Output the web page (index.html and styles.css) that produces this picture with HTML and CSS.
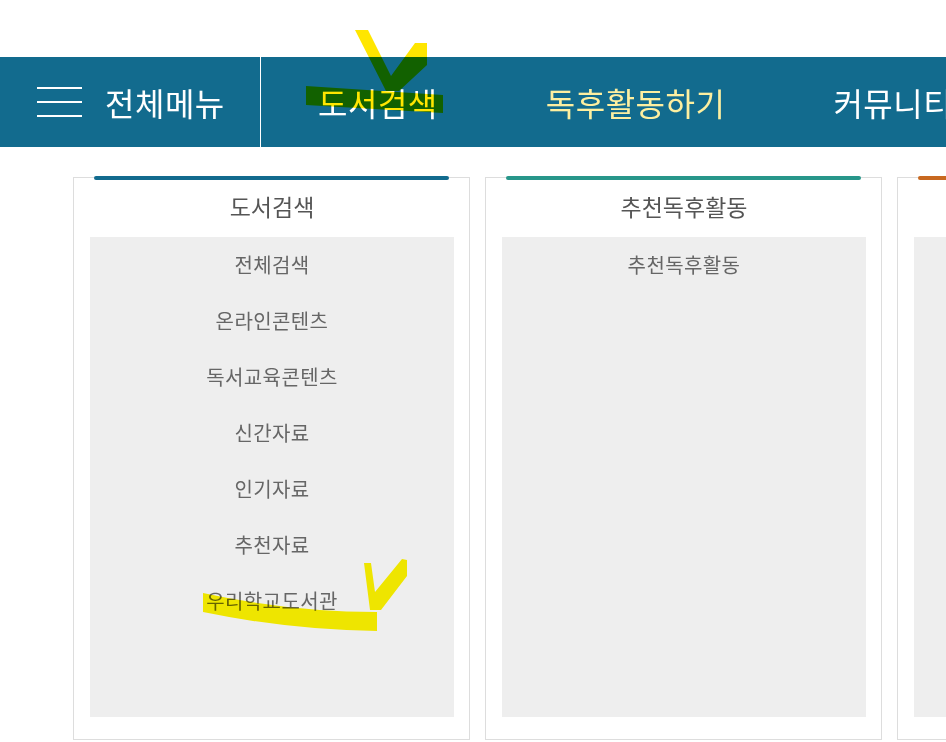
FILE: index.html
```html
<!DOCTYPE html>
<html lang="ko">
<head>
    <meta charset="UTF-8">
    <meta name="viewport" content="width=device-width, initial-scale=1.0">
    <title>도서검색 - 전체메뉴</title>
    <link rel="stylesheet" href="styles.css">
</head>
<body>

    <div class="page">
        <div class="top-space"></div>

        <!-- 상단 메뉴 -->
        <nav class="gnb">
            <div class="all-menu">
                <span class="hamburger"><i></i><i></i><i></i></span>
                <span class="all-menu-label">전체메뉴</span>
            </div>
            <ul class="gnb-list">
                <li>도서검색</li>
                <li class="on">독후활동하기</li>
                <li>커뮤니티</li>
            </ul>
        </nav>

        <!-- 서브메뉴 -->
        <div class="submenu">
            <section class="sub-card blue">
                <span class="sub-bar"></span>
                <h2 class="sub-title">도서검색</h2>
                <ul class="sub-list">
                    <li>전체검색</li>
                    <li>온라인콘텐츠</li>
                    <li>독서교육콘텐츠</li>
                    <li>신간자료</li>
                    <li>인기자료</li>
                    <li>추천자료</li>
                    <li>우리학교도서관</li>
                </ul>
            </section>
            <section class="sub-card teal">
                <span class="sub-bar"></span>
                <h2 class="sub-title">추천독후활동</h2>
                <ul class="sub-list">
                    <li>추천독후활동</li>
                </ul>
            </section>
            <section class="sub-card orange">
                <span class="sub-bar"></span>
                <h2 class="sub-title"></h2>
                <ul class="sub-list"></ul>
            </section>
        </div>

        <!-- 형광펜 표시 -->
        <svg class="marker" width="946" height="742" viewBox="0 0 946 742">
            <polygon fill="#ffe600" points="355,30 368,30 391,76 415,43 427,43 427,65 399,91 386,91"/>
            <polygon fill="#ffe600" points="306,86 443,95 443,113 306,105"/>
            <path fill="#fff600" d="M203,593 Q290,612 377,612 L377,631 Q290,630 203,612 Z"/>
            <polygon fill="#fff600" points="364,563 371,563 375,592 402,559 407,560 407,576 381,610 370,610"/>
        </svg>
    </div>

</body>
</html>
```

FILE: styles.css
```css
/* Basic reset */
* {
    margin: 0;
    padding: 0;
    box-sizing: border-box;
}

body {
    width: 946px;
    height: 742px;
    overflow: hidden;
    font-family: 'Noto Sans CJK KR', 'Noto Sans', sans-serif;
    background-color: #fff;
}

ul {
    list-style: none;
}

.page {
    position: relative;
    width: 946px;
    height: 742px;
    overflow: hidden;
}

.top-space {
    height: 57px;
}

/* Top navigation */
.gnb {
    display: flex;
    height: 90px;
    background-color: #126b8e;
    color: #fff;
    white-space: nowrap;
    overflow: hidden;
}

.all-menu {
    display: flex;
    align-items: center;
    gap: 23px;
    width: 261px;
    flex-shrink: 0;
    padding-left: 37px;
    border-right: 1px solid #fff;
}

.hamburger {
    display: flex;
    flex-direction: column;
    gap: 12px;
    width: 45px;
}

.hamburger i {
    display: block;
    height: 2px;
    background-color: #fff;
}

.all-menu-label,
.gnb-list li {
    font-size: 32px;
    letter-spacing: 0.5px;
    line-height: 1;
}

.gnb-list {
    display: flex;
    align-items: center;
    gap: 108px;
    padding-left: 57px;
}

.gnb-list li.on {
    color: #fdefa0;
}

/* Sub menu cards */
.submenu {
    display: flex;
    gap: 15px;
    padding-top: 30px;
    padding-left: 73px;
}

.sub-card {
    position: relative;
    flex-shrink: 0;
    width: 397px;
    padding: 0 15px 22px 16px;
    border: 1px solid #dddddd;
}

.sub-bar {
    position: absolute;
    top: -2px;
    left: 20px;
    right: 20px;
    height: 4px;
    border-radius: 2px;
}

.blue .sub-bar { background-color: #126b8e; }
.teal .sub-bar { background-color: #27968a; }
.orange .sub-bar { background-color: #c8681f; }

.sub-title {
    height: 59px;
    line-height: 56px;
    font-size: 23px;
    font-weight: normal;
    color: #555;
    text-align: center;
}

.sub-list {
    height: 480px;
    background-color: #eeeeee;
}

.sub-list li {
    height: 56px;
    line-height: 56px;
    font-size: 20px;
    letter-spacing: 0.4px;
    color: #666;
    text-align: center;
}

/* Highlighter marks */
.marker {
    position: absolute;
    top: 0;
    left: 0;
    pointer-events: none;
    mix-blend-mode: multiply;
}
```
